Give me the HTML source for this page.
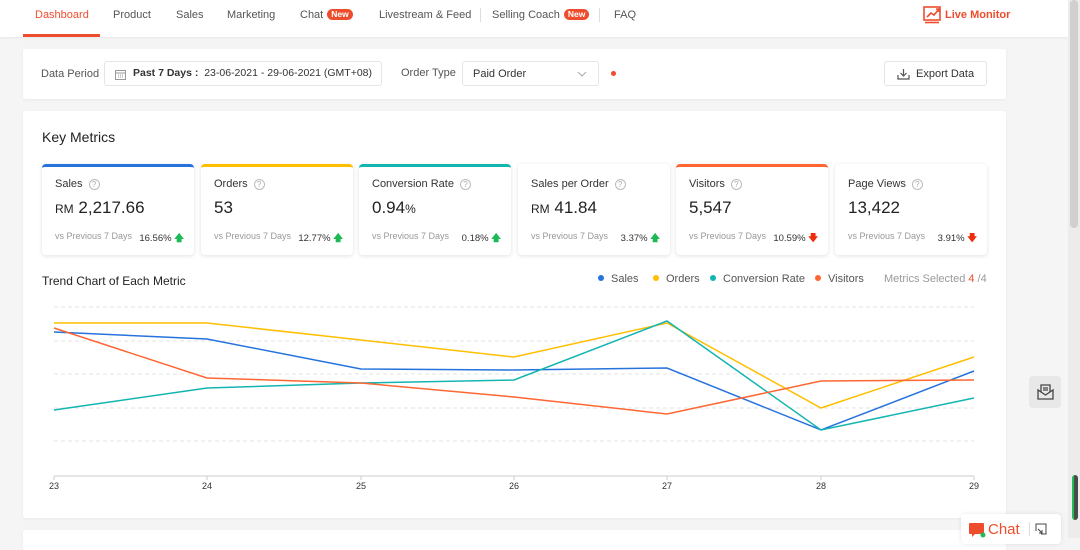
<!DOCTYPE html>
<html><head><meta charset="utf-8"><style>
*{box-sizing:border-box;margin:0;padding:0}
body{width:1080px;height:538px;overflow:hidden;background:#f5f5f5;font-family:"Liberation Sans",sans-serif;color:#333;position:relative}
.a{position:absolute}
.nav{left:0;top:0;width:1068px;height:37px;background:#fff;box-shadow:0 1px 3px rgba(0,0,0,.06)}
.nav span{position:absolute;top:8px;font-size:11px;line-height:14px;color:#555;white-space:nowrap}
.new{display:inline-block;background:#ee4d2d;color:#fff;font-size:8.5px;line-height:11px;font-weight:bold;border-radius:8px;padding:0 4px;margin-left:4px;vertical-align:top;margin-top:1px}
.card{background:#fff;border-radius:2px;box-shadow:0 1px 3px rgba(0,0,0,.05)}
.box{border:1px solid #e5e5e5;border-radius:3px;background:#fff}
.m{top:164px;width:152px;height:91px;background:#fff;border-radius:4px;box-shadow:0 1px 4px rgba(0,0,0,.12);border-top:3px solid #fff}
.m .t{position:absolute;left:13px;top:11px;font-size:11px;color:#333}
.m .q{display:inline-block;width:11px;height:11px;border:1px solid #bbb;border-radius:50%;font-size:8px;color:#aaa;text-align:center;line-height:9px;margin-left:6px;vertical-align:0}
.m .v{position:absolute;left:13px;top:31px;font-size:17px;color:#222}
.m .v small{font-size:12px}
.m .c{position:absolute;left:13px;top:64px;font-size:9px;color:#999}
.m .p{position:absolute;right:10px;top:64px;font-size:9.5px;color:#333}
.up{color:#1db954;font-weight:bold}.dn{color:#ee2d0d;font-weight:bold}
.lg{top:273px;font-size:11px;color:#555}
.dot{display:inline-block;width:6px;height:6px;border-radius:50%;margin-right:7px;vertical-align:1px}
</style></head><body>
<div class="a nav">
<span style="left:35px;color:#ee4d2d">Dashboard</span>
<div class="a" style="left:23px;top:34px;width:77px;height:3px;background:#ee4d2d"></div>
<span style="left:113px">Product</span>
<span style="left:176px">Sales</span>
<span style="left:227px">Marketing</span>
<span style="left:300px">Chat<b class="new">New</b></span>
<span style="left:379px">Livestream &amp; Feed</span>
<div class="a" style="left:480px;top:8px;width:1px;height:14px;background:#ddd"></div>
<span style="left:492px">Selling Coach<b class="new">New</b></span>
<div class="a" style="left:599px;top:8px;width:1px;height:14px;background:#ddd"></div>
<span style="left:614px">FAQ</span>
<svg class="a" style="left:923px;top:5px" width="19" height="19" viewBox="0 0 19 19" fill="none" stroke="#ee4d2d" stroke-width="1.6"><rect x="1" y="2" width="16" height="13"/><path d="M4 12l4-4 3 2 5-6M13 4h3v3"/><path d="M2 17.5h14"/></svg>
<span style="left:945px;color:#ee4d2d;font-weight:bold">Live Monitor</span>
</div>
<div class="a" style="left:1068px;top:0;width:12px;height:538px;background:#ececec"></div>
<div class="a" style="left:1070px;top:0;width:8px;height:228px;background:#d0d0d0;border-radius:4px"></div>
<div class="a" style="left:1072px;top:475px;width:6px;height:45px;background:#4a4a4a;border-radius:3px;border-left:2px solid #22bb55"></div>

<div class="a card" style="left:23px;top:49px;width:983px;height:50px">
<div class="a" style="left:18px;top:19px;font-size:11px;color:#555">Data Period</div>
<div class="a box" style="left:81px;top:12px;width:278px;height:25px">
<svg class="a" style="left:10px;top:7px" width="11" height="11" viewBox="0 0 11 11" fill="none" stroke="#999"><rect x=".5" y="1.5" width="10" height="9"/><path d="M.5 4h10M3 6h1M5 6h1M7 6h1M3 8h1M5 8h1M7 8h1"/></svg>
<div class="a" style="left:28px;top:5px;font-size:10.5px;color:#333;white-space:nowrap"><b>Past 7 Days :</b>&nbsp; 23-06-2021 - 29-06-2021 (GMT+08)</div></div>
<div class="a" style="left:378px;top:18px;font-size:11px;color:#555">Order Type</div>
<div class="a box" style="left:439px;top:12px;width:137px;height:25px">
<div class="a" style="left:10px;top:6px;font-size:11px;color:#333">Paid Order</div>
<svg class="a" style="left:114px;top:9px" width="10" height="6" fill="none" stroke="#aaa"><path d="M1 1l4 4 4-4"/></svg></div>
<div class="a" style="left:588px;top:22px;width:5px;height:5px;border-radius:50%;background:#ee4d2d"></div>
<div class="a box" style="left:861px;top:12px;width:103px;height:25px">
<svg class="a" style="left:12px;top:6px" width="13" height="12" fill="none" stroke="#555" stroke-width="1.2"><path d="M6.5 1v7M3.5 5l3 3 3-3M1 7v4h11V7"/></svg>
<div class="a" style="left:31px;top:6px;font-size:11px;color:#333">Export Data</div></div>
</div>

<div class="a card" style="left:23px;top:111px;width:983px;height:407px"></div>
<div class="a" style="left:42px;top:129px;font-size:14px;color:#222">Key Metrics</div>

<div class="a m" style="left:42px;border-top-color:#2673dd"><div class="t">Sales<span class="q">?</span></div><div class="v"><small>RM</small> 2,217.66</div><div class="c">vs Previous 7 Days</div><div class="p">16.56% <span class="up">🡅</span></div></div>
<div class="a m" style="left:201px;border-top-color:#ffbf00"><div class="t">Orders<span class="q">?</span></div><div class="v">53</div><div class="c">vs Previous 7 Days</div><div class="p">12.77% <span class="up">🡅</span></div></div>
<div class="a m" style="left:359px;border-top-color:#13b5b1"><div class="t">Conversion Rate<span class="q">?</span></div><div class="v">0.94<small>%</small></div><div class="c">vs Previous 7 Days</div><div class="p">0.18% <span class="up">🡅</span></div></div>
<div class="a m" style="left:518px"><div class="t">Sales per Order<span class="q">?</span></div><div class="v"><small>RM</small> 41.84</div><div class="c">vs Previous 7 Days</div><div class="p">3.37% <span class="up">🡅</span></div></div>
<div class="a m" style="left:676px;border-top-color:#ff6633"><div class="t">Visitors<span class="q">?</span></div><div class="v">5,547</div><div class="c">vs Previous 7 Days</div><div class="p">10.59% <span class="dn">🡇</span></div></div>
<div class="a m" style="left:835px"><div class="t">Page Views<span class="q">?</span></div><div class="v">13,422</div><div class="c">vs Previous 7 Days</div><div class="p">3.91% <span class="dn">🡇</span></div></div>

<div class="a" style="left:42px;top:274px;font-size:12px;color:#222">Trend Chart of Each Metric</div>
<div class="a lg" style="left:598px"><span class="dot" style="background:#2673dd"></span>Sales</div>
<div class="a lg" style="left:653px"><span class="dot" style="background:#ffbf00"></span>Orders</div>
<div class="a lg" style="left:710px"><span class="dot" style="background:#13b5b1"></span>Conversion Rate</div>
<div class="a lg" style="left:815px"><span class="dot" style="background:#ff6633"></span>Visitors</div>
<div class="a lg" style="left:884px;color:#999">Metrics Selected <span style="color:#ee4d2d">4</span> /4</div>

<svg class="a" style="left:0;top:290px" width="1000" height="205">
<g stroke="#e3e3e3" stroke-dasharray="4 3"><path d="M54 17H974M54 51H974M54 84H974M54 118H974M54 151H974"/></g>
<path d="M54 186H974" stroke="#ccc"/>
<g stroke="#ccc"><path d="M54 186v4M207 186v4M361 186v4M514 186v4M667 186v4M821 186v4M974 186v4"/></g>
<g fill="none" stroke-width="1.5">
<polyline stroke="#ffbf00" points="54,33 207,33 361,50 514,67 667,33 821,118 974,67"/>
<polyline stroke="#2673dd" points="54,42 207,49 361,79 514,80 667,78 821,140 974,81"/>
<polyline stroke="#13b5b1" points="54,120 207,98 361,93 514,90 667,31 821,140 974,108"/>
<polyline stroke="#ff6633" points="54,38 207,88 361,93 514,107 667,124 821,91 974,90"/>
</g>
<g font-size="9" fill="#333" text-anchor="middle" font-family="Liberation Sans"><text x="54" y="199">23</text><text x="207" y="199">24</text><text x="361" y="199">25</text><text x="514" y="199">26</text><text x="667" y="199">27</text><text x="821" y="199">28</text><text x="974" y="199">29</text></g>
</svg>

<div class="a card" style="left:23px;top:530px;width:983px;height:20px"></div>
<div class="a" style="left:1029px;top:376px;width:32px;height:32px;background:#e8e8e8;border-radius:4px">
<svg class="a" style="left:8px;top:8px" width="17" height="16" fill="none" stroke="#444" stroke-width="1.3"><path d="M1 6v9h15V6L8.5 11z"/><path d="M4 8V1h9v7M6 4h5M6 6h5"/></svg></div>
<div class="a" style="left:961px;top:514px;width:100px;height:30px;background:#fff;border-radius:4px;box-shadow:0 0 4px rgba(0,0,0,.1)">
<svg class="a" style="left:8px;top:9px" width="17" height="15"><rect x="0" y="0" width="15" height="11" rx="1" fill="#ee4d2d"/><path d="M3 11v3l3-3" fill="#ee4d2d"/><circle cx="14" cy="12" r="2.5" fill="#22bb55"/></svg>
<div class="a" style="left:27px;top:7px;font-size:15px;color:#ee4d2d">Chat</div>
<div class="a" style="left:68px;top:8px;width:1px;height:14px;background:#ddd"></div>
<svg class="a" style="left:74px;top:9px" width="12" height="12" fill="none" stroke="#444"><path d="M1 8V1h10v10H6M3 6l4 4M7 7v3H4"/></svg>
</div>
</body></html>
